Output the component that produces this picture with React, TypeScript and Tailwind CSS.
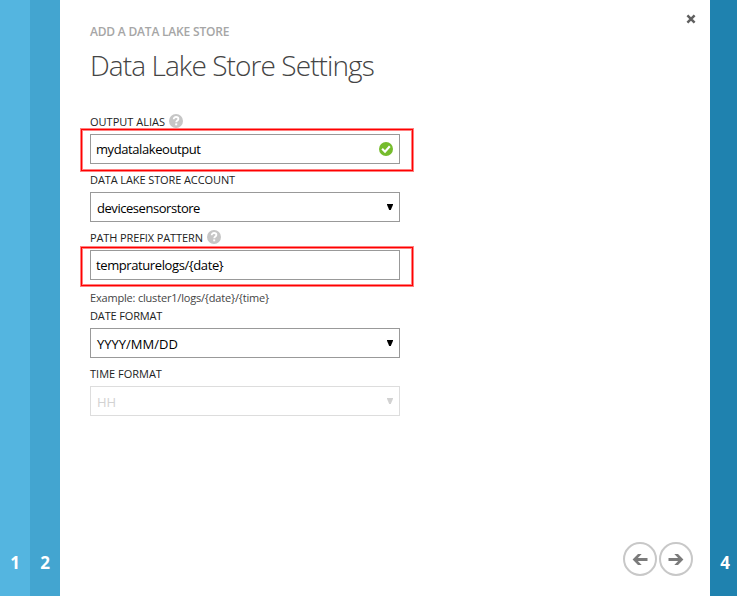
import React from "react";

function Help() {
  return (
    <svg width="14" height="14" viewBox="0 0 14 14" className="mb-px ml-1 shrink-0 self-end">
      <circle cx="7" cy="7" r="7" fill="#c6c6c6" />
      <path d="M4.7 5.3C4.7 3.7 5.7 3 7.1 3s2.3.8 2.3 1.9C9.4 6.4 7.2 6.5 7.2 8.3" fill="none" stroke="#fff" strokeWidth="1.8" />
      <rect x="6.2" y="9.4" width="2" height="1.9" fill="#fff" />
    </svg>
  );
}

function Label({ text, spacing, help }: { text: string; spacing: string; help?: boolean }) {
  return (
    <div className="flex h-7 items-end pb-[5px]">
      <div className="flex h-[14px] items-center">
        <span className={`whitespace-nowrap text-[11px] leading-[14px] text-[#222] ${spacing}`}>{text}</span>
        {help && <Help />}
      </div>
    </div>
  );
}

function Highlight({ size }: { size: string }) {
  return (
    <div className={`pointer-events-none absolute -left-[11px] w-[334px] border border-[#ff8080] ${size}`}>
      <div className="h-full border border-[#ff0000]">
        <div className="h-full border border-[#ff8080]" />
      </div>
    </div>
  );
}

function TextField({ value, spacing, valid, mark }: { value: string; spacing: string; valid?: boolean; mark: string }) {
  return (
    <div className="relative flex h-[30px] items-center justify-between border border-[#999] pl-[5px] pr-[6px]">
      <span className={`text-[13px] leading-[18px] text-black ${spacing}`}>{value}</span>
      {valid && (
        <svg width="14" height="14" viewBox="0 0 14 14">
          <circle cx="7" cy="7" r="7" fill="#76bc2d" />
          <path d="M3.1 6.8l2.9 3 4.8-5.6" fill="none" stroke="#fff" strokeWidth="2.1" />
        </svg>
      )}
      <Highlight size={mark} />
    </div>
  );
}

function SelectField({ value, spacing, disabled }: { value: string; spacing: string; disabled?: boolean }) {
  return (
    <div className={`flex h-[30px] justify-between border pl-[6px] pr-[6px] ${disabled ? "border-[#ddd] text-[#d2d2d2]" : "border-[#999] text-black"}`}>
      <span className={`pt-[6px] text-[13px] leading-[18px] ${spacing}`}>{value}</span>
      <svg width="6" height="6" viewBox="0 0 6 6" className="mt-[11px]">
        <path d="M0 0h6v.8L3.8 6H2.2L0 .8z" fill="currentColor" />
      </svg>
    </div>
  );
}

function NavButton({ flip }: { flip?: boolean }) {
  return (
    <button className="flex size-[34px] items-center justify-center rounded-full border-2 border-[#c8c8c8]">
      <svg width="16" height="12" viewBox="0 0 16 12" className={flip ? "-scale-x-100" : ""}>
        <path d="M2.6 5.1H15.5V8H2.6zM.6 6.5L6 1h3.7L4.4 6.5 9.7 12H6z" fill="#7b7b7b" />
      </svg>
    </button>
  );
}

export default function App() {
  return (
    <div className="flex h-[596px] w-[737px] bg-white font-['Open_Sans','Noto_Sans',sans-serif] text-[17px] font-bold">
      <div className="flex w-[30px] items-end justify-center bg-[#54b5e0] pb-[21px] leading-6 text-white">1</div>
      <div className="flex w-[30px] items-end justify-center bg-[#43a5d0] pb-[21px] leading-6 text-white">2</div>
      <main className="flex w-[650px] flex-col pl-[30px] font-normal">
        <header className="flex h-[106px] justify-between">
          <div className="pt-[23px]">
            <div className="whitespace-nowrap text-[12px] font-semibold leading-[17px] tracking-[-0.2px] text-[#a6a6a6]">ADD A DATA LAKE STORE</div>
            <h1 className="mt-[6px] whitespace-nowrap text-[28px] font-light leading-[38px] tracking-[-0.92px] text-[#444]">Data Lake Store Settings</h1>
          </div>
          <svg width="10" height="10" viewBox="0 0 10 10" className="mr-[14px] mt-[14px]">
            <path d="M1.4 1.4l7.2 7.2M8.6 1.4L1.4 8.6" fill="none" stroke="#606060" strokeWidth="2.5" />
          </svg>
        </header>
        <form className="w-[310px]">
          <Label text="OUTPUT ALIAS" spacing="tracking-[0px]" help />
          <TextField value="mydatalakeoutput" spacing="tracking-[-0.42px]" valid mark="-top-[7px] h-[44px]" />
          <Label text="DATA LAKE STORE ACCOUNT" spacing="tracking-[-0.1px]" />
          <SelectField value="devicesensorstore" spacing="tracking-[-0.45px]" />
          <Label text="PATH PREFIX PATTERN" spacing="tracking-[-0.11px]" help />
          <TextField value="tempraturelogs/{date}" spacing="tracking-[-0.4px]" mark="-top-[5px] h-[41px]" />
          <div className="flex h-5 items-end">
            <span className="whitespace-nowrap text-[11px] leading-[5px] tracking-[-0.19px] text-[#444]">Example: cluster1/logs/{"{date}/{time}"}</span>
          </div>
          <Label text="DATE FORMAT" spacing="tracking-[-0.15px]" />
          <SelectField value="YYYY/MM/DD" spacing="tracking-[0px]" />
          <Label text="TIME FORMAT" spacing="tracking-[0px]" />
          <SelectField value="HH" spacing="tracking-[0px]" disabled />
        </form>
        <div className="mt-auto flex justify-end gap-[2px] pb-5 pr-[17px]">
          <NavButton />
          <NavButton flip />
        </div>
      </main>
      <div className="flex w-[27px] items-end justify-center bg-[#1f82af] pb-[21px] pl-[3px] leading-6 text-white">4</div>
    </div>
  );
}
